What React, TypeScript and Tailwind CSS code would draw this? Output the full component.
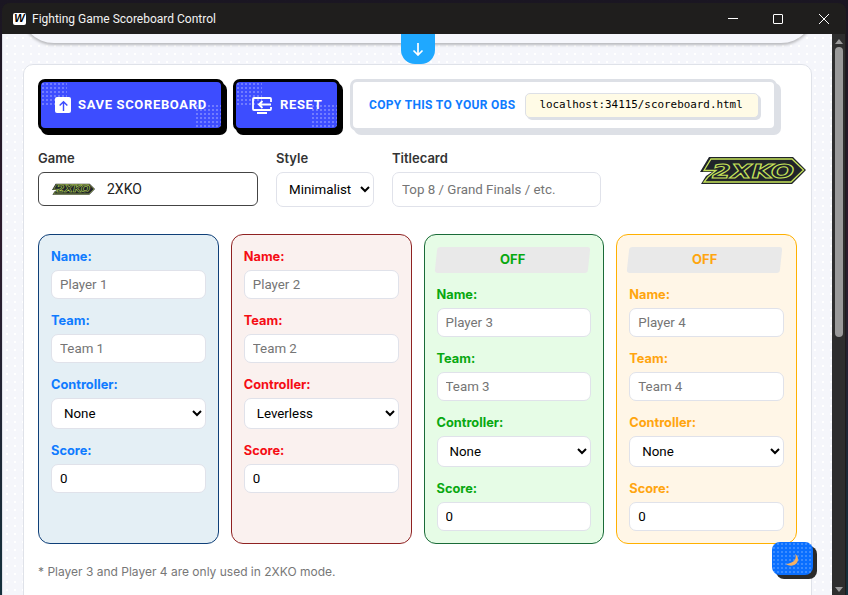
type PlayerCard = {
  id: number;
  controller: string;
  bg: string;
  border: string;
  text: string;
  toggle?: boolean;
};

const players: PlayerCard[] = [
  { id: 1, controller: "None", bg: "bg-[#e4eff5]", border: "border-[#0f3f78]", text: "text-[#0f7bff]" },
  { id: 2, controller: "Leverless", bg: "bg-[#faf1ef]", border: "border-[#8f2222]", text: "text-[#f50d14]" },
  { id: 3, controller: "None", bg: "bg-[#e6fce6]", border: "border-[#1a6b38]", text: "text-[#08a810]", toggle: true },
  { id: 4, controller: "None", bg: "bg-[#fff6e7]", border: "border-[#ffb000]", text: "text-[#ffa50f]", toggle: true },
];

const controllers = ["None", "Leverless", "Arcade Stick", "Pad"];

const inputClass =
  "w-full h-[29px] rounded-[7px] border border-[#e0e2ea] bg-white px-[8px] text-[13.33px] text-black outline-none placeholder:text-[#757575] font-['Roboto',sans-serif]";

const dots = "bg-[radial-gradient(#ffffff44_1px,transparent_1.2px)] bg-[size:4px_4px]";

const fieldLabel = "mb-[6px] block text-[13px] leading-[16px] font-semibold text-[#333] font-['Inter',sans-serif]";

// dark silhouette with a lime edge, letters set on top with a lime outline
function Logo({ className }: { className: string }) {
  return (
    <svg viewBox="0 0 106 28" className={className}>
      <polygon points="9,0 93,0 106,13 92,27 1,27 6,19 12,15 0,15" fill="#20242a" />
      <polygon points="11,2 92,2 103.5,13 91,25 4,25 8,20 16,13.5 4,13.5" fill="#20242a" stroke="#c6e35a" strokeWidth="1.3" />
      <text
        x="53"
        y="21"
        textAnchor="middle"
        fontFamily="'DejaVu Sans', sans-serif"
        fontWeight="700"
        fontStyle="italic"
        fontSize="20"
        textLength="82"
        lengthAdjust="spacingAndGlyphs"
        fill="#20242a"
        stroke="#c6e35a"
        strokeWidth="1"
      >
        2XKO
      </text>
    </svg>
  );
}

function ActionButton({ icon, label, className }: { icon: React.ReactNode; label: string; className: string }) {
  return (
    <button
      className={`relative flex h-[52px] shrink-0 items-center gap-[7px] overflow-hidden rounded-[7px] border-[3px] border-black bg-[#3d4dff] text-[13px] font-bold tracking-[0.05em] text-white font-['Roboto',sans-serif] ${className}`}
    >
      <span className={`absolute left-0 top-0 h-[24px] w-[26px] ${dots}`} />
      <span className={`absolute bottom-0 right-0 h-[24px] w-[26px] ${dots}`} />
      {icon}
      <span className="relative">{label}</span>
    </button>
  );
}

function Player({ p }: { p: PlayerCard }) {
  const labelClass = `mb-[5px] block pt-[1px] text-[12.8px] leading-[16px] font-bold font-['Inter',sans-serif] ${p.text}`;
  return (
    <div className={`h-[310px] rounded-[12px] border px-[12px] ${p.toggle ? "pt-[12px]" : "pt-[13px]"} ${p.bg} ${p.border}`}>
      {p.toggle && (
        <div className="-ml-[1px] mb-[13px] flex h-[26px] w-[153px] -skew-x-[6deg] items-center justify-center rounded-[3px] bg-[#e9e9e9]">
          <span className={`skew-x-[6deg] text-[13px] font-bold font-['Inter',sans-serif] ${p.text}`}>OFF</span>
        </div>
      )}
      <div className="flex flex-col gap-[13px]">
        <div>
          <label className={labelClass}>Name:</label>
          <input className={inputClass} placeholder={`Player ${p.id}`} />
        </div>
        <div>
          <label className={labelClass}>Team:</label>
          <input className={inputClass} placeholder={`Team ${p.id}`} />
        </div>
        <div>
          <label className={labelClass}>Controller:</label>
          <select defaultValue={p.controller} className={`${inputClass} !h-[31px]`}>
            {controllers.map((c) => (
              <option key={c}>{c}</option>
            ))}
          </select>
        </div>
        <div>
          <label className={labelClass}>Score:</label>
          <input className={inputClass} defaultValue="0" />
        </div>
      </div>
    </div>
  );
}

export default function App() {
  return (
    <div className="h-[595px] w-[848px] overflow-hidden bg-[linear-gradient(180deg,#1a1622,#2c1a2c_40%,#14303c)] px-[2px] pt-[3px]">
      <div className="h-[640px] overflow-hidden rounded-t-[8px] bg-[#1f1e1d]">
        {/* title bar */}
        <div className="relative z-10 flex h-[31px] items-center bg-[#1f1e1d] text-white">
          <span className="ml-[11px] flex h-[12px] w-[13px] items-center justify-center rounded-[2px] bg-white text-[11px] font-black italic text-black font-['Liberation_Sans',sans-serif]">
            W
          </span>
          <span className="ml-[6px] text-[12px] text-[#f2f2f2] font-['Roboto',sans-serif]">Fighting Game Scoreboard Control</span>
          <div className="ml-auto flex items-center gap-[36px] pr-[17px]">
            <span className="-mr-[1px] h-px w-[10px] bg-white" />
            <span className="h-[10px] w-[10px] rounded-[1px] border border-white" />
            <svg viewBox="0 0 10 10" className="h-[10px] w-[10px]" stroke="white" strokeWidth="1" fill="none">
              <path d="M0 0L10 10M10 0L0 10" />
            </svg>
          </div>
        </div>

        <div className="flex">
          <div className="relative h-[610px] w-[830px] border-l border-[#dfe1e8] bg-[#f5f6fb] bg-[radial-gradient(#ffffff_1.2px,transparent_1.4px)] bg-[size:8px_8px]">
            {/* collapsed drawer */}
            <div className="mx-[17px] -mt-[31px] h-[40px] rounded-b-[34px] bg-[#f6f7fc] shadow-[0_2px_3px_#00000040]" />
            <button className="absolute left-[398px] top-0 flex h-[30px] w-[34px] items-center justify-center rounded-b-[14px] bg-[#1fa8ff] text-white">
              <svg viewBox="0 0 12 14" className="h-[14px] w-[12px]" stroke="white" strokeWidth="1.7" fill="none">
                <path d="M6 1V13M1.5 8.5L6 13L10.5 8.5" />
              </svg>
            </button>

            {/* main card */}
            <div className="ml-[20px] mt-[21px] h-[560px] w-[789px] rounded-[10px] border border-[#dfe2e9] bg-white px-[14px] pt-[14px]">
              <div className="flex items-start">
                <ActionButton
                  className="w-[186px] pl-[14px] shadow-[3px_4px_0_#000]"
                  label="SAVE SCOREBOARD"
                  icon={
                    <span className="relative flex h-[16px] w-[16px] items-center justify-center rounded-[2px] bg-white">
                      <svg viewBox="0 0 10 10" className="h-[11px] w-[11px]" stroke="#3d4dff" strokeWidth="1.3" fill="none">
                        <path d="M5 10V2M1.5 5L5 1.5L8.5 5" />
                      </svg>
                    </span>
                  }
                />
                <ActionButton
                  className="ml-[9px] w-[107px] pl-[16px] shadow-[3px_4px_0_#000]"
                  label="RESET"
                  icon={
                    <svg viewBox="0 0 20 17" className="relative mr-[1px] h-[17px] w-[20px]" stroke="white" fill="none" strokeWidth="1.8">
                      <path d="M19 5V2a1 1 0 0 0-1-1H2a1 1 0 0 0-1 1V12a1 1 0 0 0 1 1H18a1 1 0 0 0 1-1V10" />
                      <path d="M19 7.5H7M10.5 4L7 7.5L10.5 11" />
                      <path d="M5 16H15" />
                    </svg>
                  }
                />
                <div className="ml-[10px] flex h-[52px] w-[427px] shrink-0 items-center rounded-[7px] border-[3px] border-[#dde0e6] bg-white pl-[16px] shadow-[4px_4px_0_#dde0e6]">
                  <span className="text-[12px] font-bold tracking-[0.028em] text-[#0f7bff] font-['Roboto',sans-serif]">
                    COPY THIS TO YOUR OBS
                  </span>
                  <span className="ml-[10px] flex h-[25px] w-[234px] items-center rounded-[5px] border-[1.5px] border-[#dde0e6] bg-[#fffbe6] pl-[13px] pt-[1px] text-[10.9px] text-black shadow-[2px_2px_0_#dde0e6] font-['DejaVu_Sans_Mono',monospace]">
                    localhost:34115/scoreboard.html
                  </span>
                </div>
              </div>

              {/* game row */}
              <div className="mt-[19px] flex">
                <div className="w-[220px] shrink-0">
                  <label className={fieldLabel}>Game</label>
                  <div className="flex h-[34px] items-center rounded-[6px] border border-[#444] pl-[13px]">
                    <Logo className="h-[13px] w-[43px]" />
                    <span className="ml-[12px] text-[14px] text-[#222] font-['Roboto',sans-serif]">2XKO</span>
                  </div>
                </div>
                <div className="ml-[18px] w-[98px] shrink-0">
                  <label className={fieldLabel}>Style</label>
                  <select defaultValue="Minimalist" className={`${inputClass} !h-[35px] !pr-0`}>
                    <option>Minimalist</option>
                    <option>Classic</option>
                  </select>
                </div>
                <div className="ml-[18px] w-[209px] shrink-0">
                  <label className={fieldLabel}>Titlecard</label>
                  <input className={`${inputClass} !h-[35px] !pl-[9px]`} placeholder="Top 8 / Grand Finals / etc." />
                </div>
                <Logo className="ml-[99px] mt-[7px] h-[28px] w-[106px] shrink-0" />
              </div>

              {/* players */}
              <div className="mt-[27px] grid w-[759px] grid-cols-4 gap-[12px]">
                {players.map((p) => (
                  <Player key={p.id} p={p} />
                ))}
              </div>

              <p className="mt-[19px] text-[12px] text-[#777] font-['Inter',sans-serif]">
                * Player 3 and Player 4 are only used in 2XKO mode.
              </p>
            </div>

            {/* theme toggle */}
            <button className="absolute left-[769px] top-[508px] flex h-[33px] w-[41px] items-center justify-center rounded-[8px] bg-[#0a6fff] bg-[radial-gradient(#ffffff33_1px,transparent_1.2px)] bg-[size:4px_4px] shadow-[4px_4px_0_#2a2a2a]">
              <svg viewBox="0 0 14 14" className="mr-[2px] mt-[2px] h-[14px] w-[14px]">
                <path d="M10 1C12 5 10 10 1 11C5 14 12 13 13 7C13 4 12 2 10 1Z" fill="#f4b064" />
              </svg>
            </button>
          </div>

          {/* scrollbar */}
          <div className="flex h-[561px] w-[13px] flex-col items-center bg-[#2e2e2e] pt-[5px]">
            <span className="h-0 w-0 border-x-[4px] border-b-[5px] border-x-transparent border-b-[#9a9a9a]" />
            <span className="mt-[3px] h-[290px] w-[8px] rounded-full bg-[#9a9a9a]" />
            <span className="mb-[3px] mt-auto h-0 w-0 border-x-[4px] border-t-[5px] border-x-transparent border-t-[#9a9a9a]" />
          </div>
        </div>
      </div>
    </div>
  );
}
